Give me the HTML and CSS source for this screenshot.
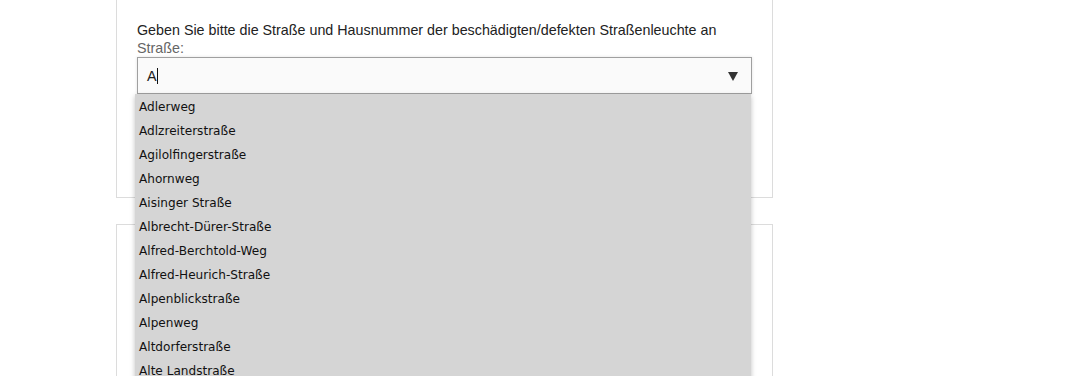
FILE: index.html
```html
<!DOCTYPE html>
<html lang="de">
<head>
<meta charset="utf-8">
<link rel="stylesheet" href="styles.css">
</head>
<body>
<div class="page">
  <section class="card card-first">
    <p class="question">Geben Sie bitte die Straße und Hausnummer der beschädigten/defekten Straßenleuchte an</p>
    <label class="label">Straße:</label>
    <div class="combo">
      <div class="input"><span class="value">A</span><span class="caret"></span><span class="arrow"></span></div>
      <ul class="menu">
        <li>Adlerweg</li>
        <li>Adlzreiterstraße</li>
        <li>Agilolfingerstraße</li>
        <li>Ahornweg</li>
        <li>Aisinger Straße</li>
        <li>Albrecht-Dürer-Straße</li>
        <li>Alfred-Berchtold-Weg</li>
        <li>Alfred-Heurich-Straße</li>
        <li>Alpenblickstraße</li>
        <li>Alpenweg</li>
        <li>Altdorferstraße</li>
        <li>Alte Landstraße</li>
      </ul>
    </div>
  </section>
  <section class="card card-second"></section>
</div>
</body>
</html>
```
FILE: styles.css
```css
html, body {
  margin: 0;
  padding: 0;
  background: #fff;
  overflow: hidden;
  height: 376px;
}
.page {
  width: 657px;
  margin-left: 116px;
  display: flex;
  flex-direction: column;
  gap: 26px;
  font-family: "Liberation Sans", Arial, sans-serif;
}
.card {
  border: 1px solid #dcdcdc;
  box-sizing: border-box;
  padding: 0 20px;
}
.card-first {
  border-top: none;
  height: 198px;
  padding-top: 21px;
}
.card-second {
  height: 152px;
  border-bottom: none;
}
.question {
  margin: 0;
  font-size: 14.3px;
  line-height: 19px;
  color: #222;
}
.label {
  display: block;
  font-size: 14.3px;
  line-height: 17px;
  color: #666;
}
.combo {
  position: relative;
  z-index: 2;
}
.input {
  position: relative;
  height: 37px;
  box-sizing: border-box;
  border: 1px solid #a0a0a0;
  background: #fafafa;
  box-shadow: 0 0 3px rgba(0,0,0,0.12);
  display: flex;
  align-items: center;
  padding-left: 9px;
  font-size: 14.3px;
  color: #222;
}
.caret {
  display: inline-block;
  width: 1px;
  height: 16px;
  background: #111;
}
.arrow {
  position: absolute;
  right: 13px;
  top: 14px;
  width: 0;
  height: 0;
  border-left: 5px solid transparent;
  border-right: 5px solid transparent;
  border-top: 9px solid #333;
}
.menu {
  position: absolute;
  left: -2px;
  top: 37px;
  width: 616px;
  margin: 0;
  padding: 1px 0 0;
  list-style: none;
  background: #d5d5d5;
  box-shadow: 0 2px 5px rgba(0,0,0,0.25);
  font-family: "DejaVu Sans", Verdana, sans-serif;
  font-size: 12.1px;
  color: #111;
}
.menu li {
  height: 24px;
  line-height: 24px;
  padding-left: 4px;
}
```
